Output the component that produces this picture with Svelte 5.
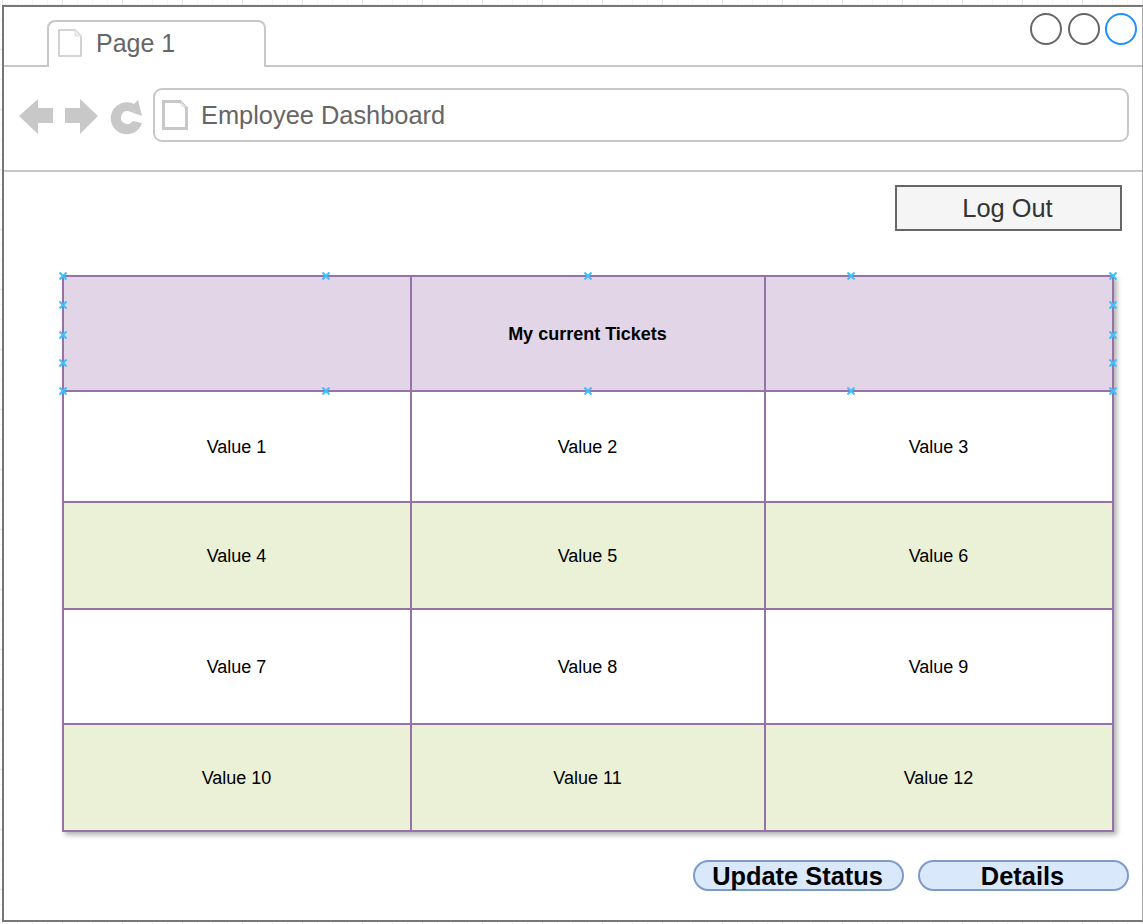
<script>
  const rows = [
    ["Value 1", "Value 2", "Value 3"],
    ["Value 4", "Value 5", "Value 6"],
    ["Value 7", "Value 8", "Value 9"],
    ["Value 10", "Value 11", "Value 12"]
  ];
  // selection handles on the header row, relative to the table corner
  const handles = [
    [0, 0], [263, 0], [525, 0], [788, 0], [1050, 0],
    [0, 29], [0, 59], [0, 87],
    [1050, 29], [1050, 59], [1050, 87],
    [0, 115], [263, 115], [525, 115], [788, 115], [1050, 115]
  ];
</script>

<div class="frame">
  <div class="tabbar">
    <div class="tab">
      <svg class="doc" width="24" height="28" viewBox="0 0 24 28">
        <path d="M1 1H17L23 7V27H1Z" fill="#fff" stroke="#c8c8c8" stroke-width="1.6" />
        <path d="M17 1V7H23" fill="#eee" stroke="#ddd" stroke-width="1" />
      </svg>
      <span>Page 1</span>
    </div>
    <div class="winbtns">
      <i></i>
      <i></i>
      <i class="active"></i>
    </div>
  </div>

  <div class="navbar">
    <svg class="arrows" width="124" height="36" viewBox="19 99 124 36">
      <path d="M19 116L38 99V108H53V123H38V134Z" fill="#c8c8c8" />
      <path d="M98 116L80 99V108H65V123H80V134Z" fill="#c8c8c8" />
      <path d="M138 100L134 104A16 16 0 1 0 142 123L133 121A6.5 6.5 0 1 1 128 111L142 116Z" fill="#c8c8c8" />
    </svg>
    <div class="address">
      <svg width="26" height="30" viewBox="0 0 26 30">
        <path d="M1.5 1.5H18L24.5 8V28.5H1.5Z" fill="#fff" stroke="#c8c8c8" stroke-width="3" />
        <path d="M19 2V7H24" fill="#e8e8e8" />
      </svg>
      <span>Employee Dashboard</span>
    </div>
  </div>

  <div class="content">
    <div class="topactions">
      <button class="logout">Log Out</button>
    </div>

    <div class="tablewrap">
      <div class="ticketgrid">
        <div class="cell head"></div>
        <div class="cell head title">My current Tickets</div>
        <div class="cell head"></div>
        {#each rows as row, r}
          {#each row as value}
            <div class="cell" class:alt={r % 2 === 1}>{value}</div>
          {/each}
        {/each}
      </div>
      {#each handles as [x, y]}
        <svg class="handle" width="8" height="8" viewBox="0 0 8 8" style="left:{x - 3}px; top:{y - 3}px">
          <path d="M0.5 0.5L7.5 7.5M7.5 0.5L0.5 7.5" stroke="#3cc0ff" stroke-width="2" />
        </svg>
      {/each}
    </div>

    <div class="bottomactions">
      <button class="pill">Update Status</button>
      <button class="pill">Details</button>
    </div>
  </div>
</div>

<style>
  :global(body) {
    margin: 0;
    background-color: #fff;
    background-image:
      linear-gradient(#e4e4e4 1px, transparent 1px),
      linear-gradient(90deg, #e4e4e4 1px, transparent 1px),
      linear-gradient(#f3f3f3 1px, transparent 1px),
      linear-gradient(90deg, #f3f3f3 1px, transparent 1px);
    background-size: 60px 60px, 60px 60px, 15px 15px, 15px 15px;
    background-position: 0 49px, 2px 0, 0 4px, 2px 0;
    height: 924px;
    overflow: hidden;
  }
  .frame {
    box-sizing: border-box;
    margin: 5px 0 0 2px;
    width: 1141px;
    height: 917px;
    background: #fff;
    border: 2px solid #777;
    border-right: 1px solid #aaa;
    font-family: "Liberation Sans", Arial, sans-serif;
    display: flex;
    flex-direction: column;
  }
  .tabbar {
    height: 60px;
    flex: none;
    box-sizing: border-box;
    border-bottom: 2px solid #c8c8c8;
    padding-left: 43px;
    display: flex;
    justify-content: space-between;
  }
  .tab {
    box-sizing: border-box;
    width: 219px;
    height: 47px;
    margin-top: 13px;
    background: #fff;
    border: 2px solid #c8c8c8;
    border-bottom: none;
    border-radius: 8px 8px 0 0;
    padding: 7px 0 0 9px;
    display: flex;
    align-items: flex-start;
    gap: 14px;
    font-size: 25px;
    line-height: 28px;
    color: #666;
  }
  .doc {
    flex: none;
  }
  .winbtns {
    display: flex;
    gap: 5.5px;
    padding: 6px 5px 0 0;
  }
  .winbtns i {
    box-sizing: border-box;
    display: block;
    width: 32px;
    height: 32px;
    border: 2px solid #666;
    border-radius: 50%;
  }
  .winbtns i.active {
    border-color: #1e90ff;
  }
  .navbar {
    height: 105px;
    flex: none;
    box-sizing: border-box;
    border-bottom: 2px solid #c8c8c8;
    padding: 21px 13px 0 15px;
    display: flex;
    align-items: flex-start;
    gap: 10px;
  }
  .arrows {
    flex: none;
    margin-top: 11px;
  }
  .address {
    box-sizing: border-box;
    flex: 1;
    height: 54px;
    border: 2px solid #c8c8c8;
    border-radius: 9px;
    display: flex;
    align-items: center;
    padding-left: 7px;
    gap: 13px;
    font-size: 25.4px;
    color: #666;
  }
  .content {
    flex: 1;
    display: flex;
    flex-direction: column;
    padding: 13px 13px 0 58px;
  }
  .topactions {
    display: flex;
    justify-content: flex-end;
    padding-right: 7px;
  }
  .logout {
    box-sizing: border-box;
    width: 227px;
    height: 46px;
    background: #f5f5f5;
    border: 2px solid #666;
    border-radius: 0;
    font-family: inherit;
    font-size: 25.4px;
    color: #333;
    padding: 0 2px 0 0;
  }
  .tablewrap {
    position: relative;
    width: 1052px;
    margin-top: 44px;
  }
  .ticketgrid {
    display: grid;
    grid-template-columns: 348px 354px 348px;
    grid-template-rows: 115px 111px 107px 115px 107px;
    box-sizing: border-box;
    border-top: 2px solid #9673a6;
    border-left: 2px solid #9673a6;
    box-shadow: 3px 3px 5px rgba(0, 0, 0, 0.3);
    font-size: 18px;
    color: #000;
  }
  .cell {
    box-sizing: border-box;
    border-right: 2px solid #9673a6;
    border-bottom: 2px solid #9673a6;
    padding: 2px 1px 0 0;
    display: flex;
    align-items: center;
    justify-content: center;
    background: #fff;
  }
  .cell.head {
    background: #e1d5e7;
  }
  .cell.title {
    font-weight: bold;
  }
  .cell.alt {
    background: #ebf1d6;
  }
  .handle {
    position: absolute;
    display: block;
  }
  .bottomactions {
    display: flex;
    justify-content: flex-end;
    gap: 14px;
    margin-top: 28px;
  }
  .pill {
    box-sizing: border-box;
    width: 211px;
    height: 31px;
    background: #dae8fc;
    border: 2px solid #7d9bc9;
    border-radius: 16px;
    font-family: inherit;
    font-size: 25.4px;
    font-weight: bold;
    color: #000;
    padding: 1px 2px 0 0;
    line-height: 27px;
  }
</style>
